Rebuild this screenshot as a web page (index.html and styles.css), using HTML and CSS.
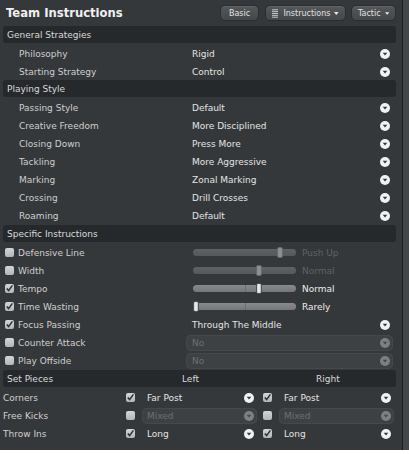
FILE: index.html
```html
<!DOCTYPE html>
<html>
<head>
<meta charset="utf-8">
<link rel="stylesheet" href="styles.css">
</head>
<body>
<div class="frame">
  <div class="window">
    <div class="titlebar">
      <h1 class="title">Team Instructions</h1>
      <div class="btns">
        <button class="btn btn-basic">Basic</button>
        <button class="btn btn-instr">
          <svg class="list-ic" width="7" height="9" viewBox="0 0 7 9"><rect x="0" y="0" width="7" height="1" fill="#cfcfcf"/><rect x="0" y="2" width="7" height="1" fill="#cfcfcf"/><rect x="0" y="4" width="7" height="1" fill="#cfcfcf"/><rect x="0" y="6" width="7" height="1" fill="#cfcfcf"/><rect x="0" y="8" width="7" height="1" fill="#cfcfcf"/></svg>
          <span>Instructions</span>
          <svg class="arr" width="5" height="3" viewBox="0 0 5 3"><path d="M0 0H5L2.5 3Z" fill="#e8e8e8"/></svg>
        </button>
        <button class="btn btn-tactic">
          <span>Tactic</span>
          <svg class="arr" width="5" height="3" viewBox="0 0 5 3"><path d="M0 0H5L2.5 3Z" fill="#e8e8e8"/></svg>
        </button>
      </div>
    </div>

    <div class="head">General Strategies</div>
    <div class="row"><div class="name">Philosophy</div><div class="dd"><span class="txt">Rigid</span><svg class="ddi" width="10" height="10" viewBox="0 0 10 10"><circle cx="5" cy="5" r="5" fill="#f2f2f2"/><path d="M2.7 3.8H7.3L5 6.6Z" fill="#35383b"/></svg></div></div>
    <div class="row"><div class="name">Starting Strategy</div><div class="dd"><span class="txt">Control</span><svg class="ddi" width="10" height="10" viewBox="0 0 10 10"><circle cx="5" cy="5" r="5" fill="#f2f2f2"/><path d="M2.7 3.8H7.3L5 6.6Z" fill="#35383b"/></svg></div></div>

    <div class="head">Playing Style</div>
    <div class="row"><div class="name">Passing Style</div><div class="dd"><span class="txt">Default</span><svg class="ddi" width="10" height="10" viewBox="0 0 10 10"><circle cx="5" cy="5" r="5" fill="#f2f2f2"/><path d="M2.7 3.8H7.3L5 6.6Z" fill="#35383b"/></svg></div></div>
    <div class="row"><div class="name">Creative Freedom</div><div class="dd"><span class="txt">More Disciplined</span><svg class="ddi" width="10" height="10" viewBox="0 0 10 10"><circle cx="5" cy="5" r="5" fill="#f2f2f2"/><path d="M2.7 3.8H7.3L5 6.6Z" fill="#35383b"/></svg></div></div>
    <div class="row"><div class="name">Closing Down</div><div class="dd"><span class="txt">Press More</span><svg class="ddi" width="10" height="10" viewBox="0 0 10 10"><circle cx="5" cy="5" r="5" fill="#f2f2f2"/><path d="M2.7 3.8H7.3L5 6.6Z" fill="#35383b"/></svg></div></div>
    <div class="row"><div class="name">Tackling</div><div class="dd"><span class="txt">More Aggressive</span><svg class="ddi" width="10" height="10" viewBox="0 0 10 10"><circle cx="5" cy="5" r="5" fill="#f2f2f2"/><path d="M2.7 3.8H7.3L5 6.6Z" fill="#35383b"/></svg></div></div>
    <div class="row"><div class="name">Marking</div><div class="dd"><span class="txt">Zonal Marking</span><svg class="ddi" width="10" height="10" viewBox="0 0 10 10"><circle cx="5" cy="5" r="5" fill="#f2f2f2"/><path d="M2.7 3.8H7.3L5 6.6Z" fill="#35383b"/></svg></div></div>
    <div class="row"><div class="name">Crossing</div><div class="dd"><span class="txt">Drill Crosses</span><svg class="ddi" width="10" height="10" viewBox="0 0 10 10"><circle cx="5" cy="5" r="5" fill="#f2f2f2"/><path d="M2.7 3.8H7.3L5 6.6Z" fill="#35383b"/></svg></div></div>
    <div class="row"><div class="name">Roaming</div><div class="dd"><span class="txt">Default</span><svg class="ddi" width="10" height="10" viewBox="0 0 10 10"><circle cx="5" cy="5" r="5" fill="#f2f2f2"/><path d="M2.7 3.8H7.3L5 6.6Z" fill="#35383b"/></svg></div></div>

    <div class="head head-gap">Specific Instructions</div>
    <div class="row">
      <div class="name check"><span class="cb"></span>Defensive Line</div>
      <div class="slider off"><span class="thumb" style="left:84px"></span></div><span class="sl-val dim">Push Up</span>
    </div>
    <div class="row">
      <div class="name check"><span class="cb"></span>Width</div>
      <div class="slider off"><span class="thumb" style="left:63px"></span></div><span class="sl-val dim">Normal</span>
    </div>
    <div class="row">
      <div class="name check"><span class="cb on"><svg width="9" height="9" viewBox="0 0 9 9"><path d="M1.8 4.6L3.6 6.6L7.4 1.4" stroke="#2d2f31" stroke-width="1.5" fill="none"/></svg></span>Tempo</div>
      <div class="slider"><span class="tick" style="left:52px"></span><span class="thumb" style="left:63px"></span></div><span class="sl-val">Normal</span>
    </div>
    <div class="row">
      <div class="name check"><span class="cb on"><svg width="9" height="9" viewBox="0 0 9 9"><path d="M1.8 4.6L3.6 6.6L7.4 1.4" stroke="#2d2f31" stroke-width="1.5" fill="none"/></svg></span>Time Wasting</div>
      <div class="slider"><span class="tick" style="left:52px"></span><span class="thumb" style="left:0px"></span></div><span class="sl-val">Rarely</span>
    </div>
    <div class="row">
      <div class="name check"><span class="cb on"><svg width="9" height="9" viewBox="0 0 9 9"><path d="M1.8 4.6L3.6 6.6L7.4 1.4" stroke="#2d2f31" stroke-width="1.5" fill="none"/></svg></span>Focus Passing</div>
      <div class="dd"><span class="txt">Through The Middle</span><svg class="ddi" width="10" height="10" viewBox="0 0 10 10"><circle cx="5" cy="5" r="5" fill="#f2f2f2"/><path d="M2.7 3.8H7.3L5 6.6Z" fill="#35383b"/></svg></div>
    </div>
    <div class="row">
      <div class="name check"><span class="cb"></span>Counter Attack</div>
      <div class="dd disabled"><span class="txt">No</span><svg class="ddi" width="10" height="10" viewBox="0 0 10 10"><circle cx="5" cy="5" r="5" fill="#7d8083"/><path d="M2.7 3.8H7.3L5 6.6Z" fill="#45484b"/></svg></div>
    </div>
    <div class="row">
      <div class="name check"><span class="cb"></span>Play Offside</div>
      <div class="dd disabled"><span class="txt">No</span><svg class="ddi" width="10" height="10" viewBox="0 0 10 10"><circle cx="5" cy="5" r="5" fill="#7d8083"/><path d="M2.7 3.8H7.3L5 6.6Z" fill="#45484b"/></svg></div>
    </div>

    <div class="head head-gap sp-head"><span class="sp-title">Set Pieces</span><span class="sp-left">Left</span><span class="sp-right">Right</span></div>
    <div class="sp-row">
      <div class="sp-name">Corners</div>
      <span class="cb on"><svg width="9" height="9" viewBox="0 0 9 9"><path d="M1.8 4.6L3.6 6.6L7.4 1.4" stroke="#2d2f31" stroke-width="1.5" fill="none"/></svg></span>
      <div class="sp-dd"><span class="txt">Far Post</span><svg class="ddi" width="10" height="10" viewBox="0 0 10 10"><circle cx="5" cy="5" r="5" fill="#f2f2f2"/><path d="M2.7 3.8H7.3L5 6.6Z" fill="#35383b"/></svg></div>
      <span class="cb on cb-right"><svg width="9" height="9" viewBox="0 0 9 9"><path d="M1.8 4.6L3.6 6.6L7.4 1.4" stroke="#2d2f31" stroke-width="1.5" fill="none"/></svg></span>
      <div class="sp-dd"><span class="txt">Far Post</span><svg class="ddi" width="10" height="10" viewBox="0 0 10 10"><circle cx="5" cy="5" r="5" fill="#f2f2f2"/><path d="M2.7 3.8H7.3L5 6.6Z" fill="#35383b"/></svg></div>
    </div>
    <div class="sp-row">
      <div class="sp-name">Free Kicks</div>
      <span class="cb"></span>
      <div class="sp-dd disabled"><span class="txt">Mixed</span><svg class="ddi" width="10" height="10" viewBox="0 0 10 10"><circle cx="5" cy="5" r="5" fill="#7d8083"/><path d="M2.7 3.8H7.3L5 6.6Z" fill="#45484b"/></svg></div>
      <span class="cb cb-right"></span>
      <div class="sp-dd disabled"><span class="txt">Mixed</span><svg class="ddi" width="10" height="10" viewBox="0 0 10 10"><circle cx="5" cy="5" r="5" fill="#7d8083"/><path d="M2.7 3.8H7.3L5 6.6Z" fill="#45484b"/></svg></div>
    </div>
    <div class="sp-row">
      <div class="sp-name">Throw Ins</div>
      <span class="cb on"><svg width="9" height="9" viewBox="0 0 9 9"><path d="M1.8 4.6L3.6 6.6L7.4 1.4" stroke="#2d2f31" stroke-width="1.5" fill="none"/></svg></span>
      <div class="sp-dd"><span class="txt">Long</span><svg class="ddi" width="10" height="10" viewBox="0 0 10 10"><circle cx="5" cy="5" r="5" fill="#f2f2f2"/><path d="M2.7 3.8H7.3L5 6.6Z" fill="#35383b"/></svg></div>
      <span class="cb on cb-right"><svg width="9" height="9" viewBox="0 0 9 9"><path d="M1.8 4.6L3.6 6.6L7.4 1.4" stroke="#2d2f31" stroke-width="1.5" fill="none"/></svg></span>
      <div class="sp-dd"><span class="txt">Long</span><svg class="ddi" width="10" height="10" viewBox="0 0 10 10"><circle cx="5" cy="5" r="5" fill="#f2f2f2"/><path d="M2.7 3.8H7.3L5 6.6Z" fill="#35383b"/></svg></div>
    </div>
  </div>
  <div class="strip"></div>
</div>
</body>
</html>
```

FILE: styles.css
```css
* { box-sizing: border-box; }
html, body { margin: 0; padding: 0; background: #ffffff; }
body {
  font-family: "DejaVu Sans", "Liberation Sans", sans-serif;
  font-size: 9px;
  color: #d0d0d0;
}
.frame {
  width: 409px;
  height: 450px;
  display: flex;
  background: #3d4043;
  box-shadow: 0 1px 3px rgba(0,0,0,0.55);
}
.window {
  width: 403px;
  height: 450px;
  background: #35383b;
  border-right: 1px solid #1c1e20;
  padding: 0 6px 0 3px;
}
.strip { flex: 1; background: #44474a; }

.titlebar {
  height: 26px;
  display: flex;
  align-items: center;
  justify-content: space-between;
}
.title {
  margin: 0 0 1px 3px;
  font-size: 11.6px;
  font-weight: bold;
  color: #f0f0f0;
}
.btns { display: flex; gap: 5px; }
.btn {
  height: 16px;
  display: flex;
  align-items: center;
  gap: 4px;
  font-family: "DejaVu Sans", "Liberation Sans", sans-serif;
  font-size: 8px;
  color: #e0e0e0;
  background: linear-gradient(#54585b, #45484b);
  border: 1px solid #2a2c2f;
  border-radius: 5px;
  padding: 0 6px;
  box-shadow: inset 0 1px 0 rgba(255,255,255,0.08);
}
.btn-basic { width: 39px; justify-content: center; margin-right: 1px; }
.btn-instr { width: 81px; padding-left: 6px; }
.btn-instr .list-ic { margin-right: 1px; }
.btn-tactic { width: 45px; padding-left: 6px; }

.head {
  height: 17px;
  margin-bottom: 1px;
  background: #26292c;
  border-radius: 3px;
  padding-left: 4px;
  display: flex;
  align-items: center;
  color: #dadada;
}
.head-gap { margin-top: 1px; }

.row {
  height: 18px;
  display: flex;
  align-items: center;
  padding-top: 1px;
}
.name {
  width: 189px;
  flex: none;
  padding-left: 16px;
  color: #cfcfcf;
}
.name.check {
  padding-left: 2px;
  display: flex;
  align-items: center;
  gap: 4px;
}
.dd {
  flex: 1;
  height: 16px;
  display: flex;
  align-items: center;
  margin-left: -6px;
  margin-right: 3px;
  padding: 0 3px 0 6px;
  border-radius: 5px;
  color: #e4e4e4;
}
.dd .txt, .sp-dd .txt { flex: 1; }
.ddi { flex: none; }
.dd.disabled, .sp-dd.disabled {
  background: #3e4144;
  box-shadow: inset 0 0 0 1px #46494c;
  color: #6c6f72;
}

.cb {
  width: 9px;
  height: 9px;
  flex: none;
  border-radius: 2px;
  background: linear-gradient(#d4d5d6, #b4b5b6);
  display: flex;
}

.slider {
  position: relative;
  width: 103px;
  height: 7px;
  margin-left: 1px;
  border-radius: 4px;
  background: linear-gradient(#868a8d, #75787b);
  flex: none;
}
.slider.off { background: linear-gradient(#5f6265, #56595c); }
.tick {
  position: absolute;
  top: 0;
  width: 1px;
  height: 7px;
  background: #6a6d70;
}
.thumb {
  position: absolute;
  top: -2px;
  width: 6px;
  height: 11px;
  border-radius: 2px;
  background: linear-gradient(90deg, #c9cbcd, #f2f2f2 50%, #b9bbbd);
  border: 1px solid #4e5154;
}
.slider.off .thumb {
  background: #8c8f92;
  border-color: #65686b;
}
.sl-val { margin-left: 6px; color: #ececec; }
.sl-val.dim { color: #5f6265; }

.sp-head { padding-left: 0; }
.sp-title { width: 179px; padding-left: 4px; }
.sp-left { width: 134px; }
.sp-right { flex: 1; }

.sp-row {
  height: 18px;
  display: flex;
  align-items: center;
  padding-top: 1px;
}
.sp-name { width: 123px; flex: none; color: #cfcfcf; }
.sp-dd {
  width: 115px;
  height: 16px;
  flex: none;
  margin-left: 7px;
  display: flex;
  align-items: center;
  padding: 0 3px 0 5px;
  border-radius: 5px;
  color: #e4e4e4;
}
.cb-right { margin-left: 6px; }
```
